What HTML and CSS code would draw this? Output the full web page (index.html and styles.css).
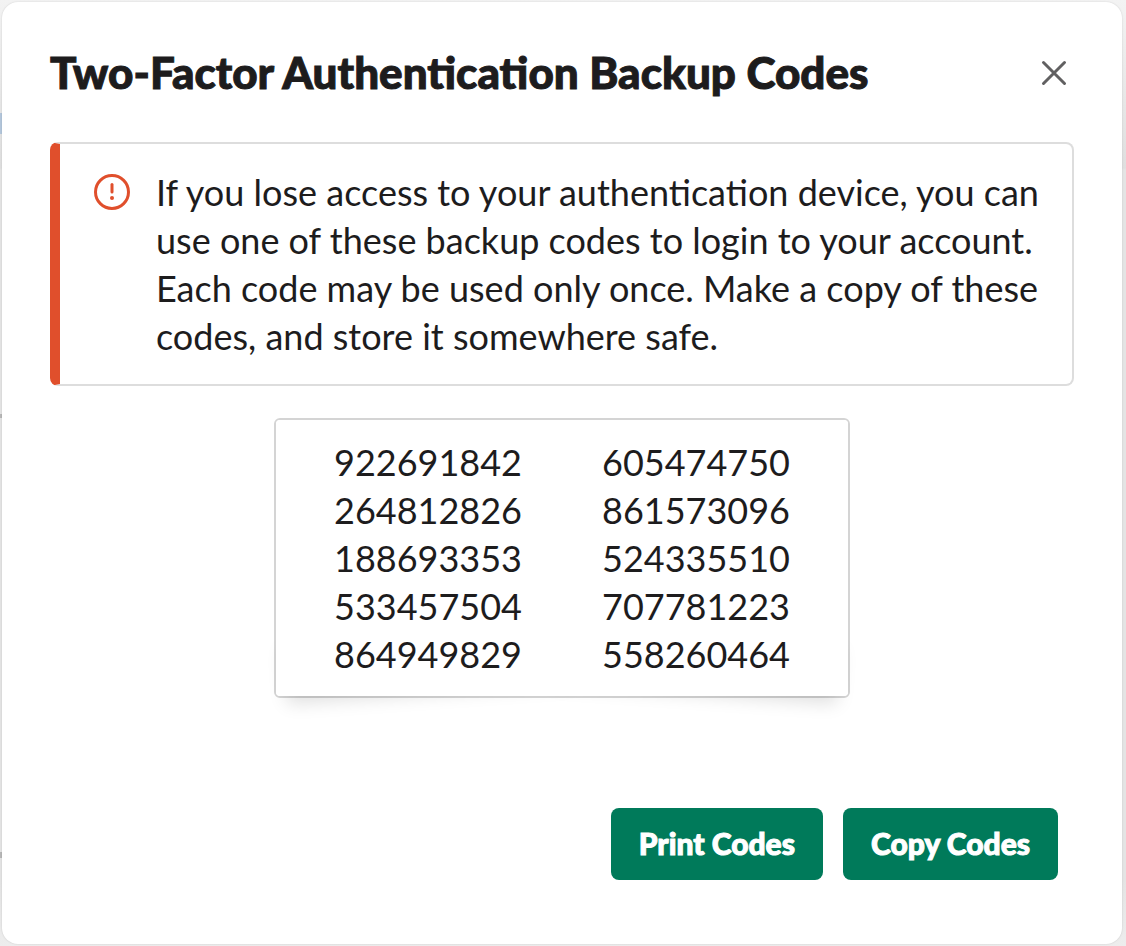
FILE: index.html
```html
<!DOCTYPE html>
<html lang="en">
<head>
    <meta charset="UTF-8">
    <meta name="viewport" content="width=device-width, initial-scale=1.0">
    <title>Two-Factor Authentication Backup Codes</title>
    <link rel="stylesheet" href="styles.css">
</head>
<body>

    <div class="modal" role="dialog" aria-labelledby="modalTitle">
        <header class="modal-header">
            <h1 id="modalTitle">Two-Factor Authentication Backup Codes</h1>
            <button class="close" aria-label="Close">
                <svg width="28" height="28" viewBox="0 0 56 56" fill="none" stroke="#616061" stroke-width="6" stroke-linecap="round">
                    <path d="M7 9l42 42M49 9l-42 42"/>
                </svg>
            </button>
        </header>

        <div class="alert">
            <svg class="alert-icon" width="36" height="36" viewBox="0 0 72 72" fill="none" stroke="#e04f2c" stroke-width="6">
                <circle cx="36" cy="36" r="33"/>
                <path d="M36 21v15" stroke-linecap="round"/>
                <circle cx="36" cy="48" r="4" fill="#e04f2c" stroke="none"/>
            </svg>
            <p>If you lose access to your authentication device, you can use one of these backup codes to login to your account. Each code may be used only once. Make a copy of these codes, and store it somewhere safe.</p>
        </div>

        <div class="codes">
            <ul>
                <li>922691842</li>
                <li>264812826</li>
                <li>188693353</li>
                <li>533457504</li>
                <li>864949829</li>
            </ul>
            <ul>
                <li>605474750</li>
                <li>861573096</li>
                <li>524335510</li>
                <li>707781223</li>
                <li>558260464</li>
            </ul>
        </div>

        <footer class="actions">
            <button class="btn">Print Codes</button>
            <button class="btn">Copy Codes</button>
        </footer>
    </div>

</body>
</html>
```

FILE: styles.css
```css
* {
    box-sizing: border-box;
}

body {
    margin: 0;
    padding: 2px 4px 2px 2px;
    min-height: 100vh;
    display: flex;
    background:
        linear-gradient(#b4c7dc, #b4c7dc) 0 113px / 2px 21px no-repeat,
        linear-gradient(#b8b8b8, #b8b8b8) 0 414px / 2px 4px no-repeat,
        linear-gradient(#b8b8b8, #b8b8b8) 0 852px / 2px 6px no-repeat,
        linear-gradient(#f3f3f3, #dfdfdf 168px, #e4e4e4 170px, #e4e4e4 880px, #ededed);
    color: #1d1c1d;
    font-family: Lato, sans-serif;
}

.modal {
    flex: 1;
    display: flex;
    flex-direction: column;
    padding: 38px 48px 64px 48px;
    background-color: #fff;
    border-radius: 16px;
    box-shadow: 0 0 2px rgba(0, 0, 0, 0.15);
}

.modal-header {
    display: flex;
    align-items: center;
    justify-content: space-between;
    height: 64px;
}

h1 {
    margin: 0;
    font-size: 44px;
    line-height: 60px;
    font-weight: 900;
    -webkit-text-stroke: 1px currentColor;
}

.close {
    display: flex;
    padding: 6px;
    border: none;
    background: none;
    cursor: pointer;
}

.alert {
    display: flex;
    gap: 26px;
    margin-top: 38px;
    padding: 24px 32px 24px 34px;
    border: 2px solid #dddddd;
    border-left: 10px solid #e04f2c;
    border-radius: 8px;
}

.alert-icon {
    flex: none;
    margin-top: 6px;
}

.alert p {
    margin: 0;
    font-size: 36px;
    line-height: 48px;
}

.codes {
    position: relative;
    z-index: 0;
    display: flex;
    align-self: center;
    gap: 80px;
    margin-top: 32px;
    padding: 18px 58px;
    border: 2px solid #d4d4d4;
    border-radius: 6px;
}

/* lifted corners under the card */
.codes::before,
.codes::after {
    content: "";
    position: absolute;
    z-index: -2;
    bottom: 18px;
    left: 8px;
    width: 50%;
    height: 20%;
    box-shadow: 0 16px 18px rgba(0, 0, 0, 0.13);
    transform: rotate(-4deg);
}

.codes::after {
    left: auto;
    right: 8px;
    transform: rotate(4deg);
}

.codes ul {
    margin: 0;
    padding: 0;
    list-style: none;
    font-size: 36px;
    line-height: 48px;
}

/* keeps the corner shadows out of the card itself */
.codes ul:first-child::before {
    content: "";
    position: absolute;
    z-index: -1;
    inset: 0;
    background-color: #fff;
    border-radius: 4px;
}

.actions {
    display: flex;
    justify-content: flex-end;
    gap: 20px;
    margin-top: auto;
    padding-right: 16px;
}

.btn {
    height: 72px;
    padding: 0 28px 2px;
    border: none;
    border-radius: 8px;
    background-color: #007a5a;
    color: #fff;
    font-family: inherit;
    font-size: 30px;
    font-weight: 900;
    -webkit-text-stroke: 1px currentColor;
    cursor: pointer;
}
```
